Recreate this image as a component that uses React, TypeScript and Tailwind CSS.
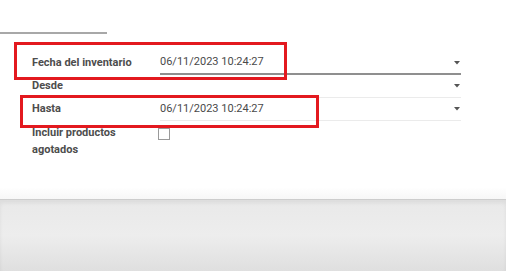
import React from 'react';

const Caret = () => (
  <svg width="6" height="4" viewBox="0 0 6 4" className="shrink-0">
    <path d="M0 0 L6 0 L3 3.5 Z" fill="#555" />
  </svg>
);

const App: React.FC = () => {
  return (
    <div className="relative w-[506px] h-[271px] overflow-hidden bg-white font-['Roboto',sans-serif] text-[11px]">
      {/* White form panel */}
      <div className="h-[199px] bg-gradient-to-b from-white from-[94%] to-[#f7f7f7] pt-[32px]">
        <div className="w-[107px] h-[2px] bg-[#a8a8a8]" />

        <div className="mt-[18px] flex flex-col">
          {/* Fecha del inventario */}
          <div className="flex h-[23px]">
            <div className="w-[160px] pl-[32px] flex items-center font-bold text-[#4d4d4d]">Fecha del inventario</div>
            <div className="w-[301px] flex items-center justify-between border-b-2 border-[#8f8f8f] text-[#4a4a4a] pr-[1px]">
              <span>06/11/2023 10:24:27</span>
              <Caret />
            </div>
          </div>

          {/* Desde */}
          <div className="flex h-[23px]">
            <div className="w-[160px] pl-[32px] flex items-center font-bold text-[#4d4d4d]">Desde</div>
            <div className="w-[301px] flex items-center justify-end border-b border-[#ebebeb] pr-[1px]">
              <Caret />
            </div>
          </div>

          {/* Hasta */}
          <div className="flex h-[23px]">
            <div className="w-[160px] pl-[32px] flex items-center font-bold text-[#4d4d4d]">Hasta</div>
            <div className="w-[301px] flex items-center justify-between border-b border-[#ebebeb] text-[#4a4a4a] pr-[1px]">
              <span>06/11/2023 10:24:27</span>
              <Caret />
            </div>
          </div>

          {/* Incluir productos agotados */}
          <div className="flex pt-[3px]">
            <div className="w-[160px] pl-[32px] pr-[20px] font-bold text-[#4d4d4d] leading-[17px]">Incluir productos agotados</div>
            <div className="pt-[4px] pl-[-2px]">
              <div className="w-[12px] h-[12px] border border-[#9a9a9a] bg-white -ml-[2px]" />
            </div>
          </div>
        </div>
      </div>

      {/* Gray area below the panel */}
      <div className="h-[72px] border-t border-[#cdcdcd] bg-gradient-to-b from-[#e9e9e9] via-[#ededed] to-[#dfdfdf] shadow-[inset_0_3px_4px_rgba(0,0,0,0.06)]" />

      {/* Red annotation boxes */}
      <div className="absolute left-[14px] top-[42px] w-[273px] h-[38px] border-[3px] border-[#e3191f]" />
      <div className="absolute left-[20px] top-[95px] w-[299px] h-[33px] border-[3px] border-[#e3191f]" />
    </div>
  );
};

export default App;
